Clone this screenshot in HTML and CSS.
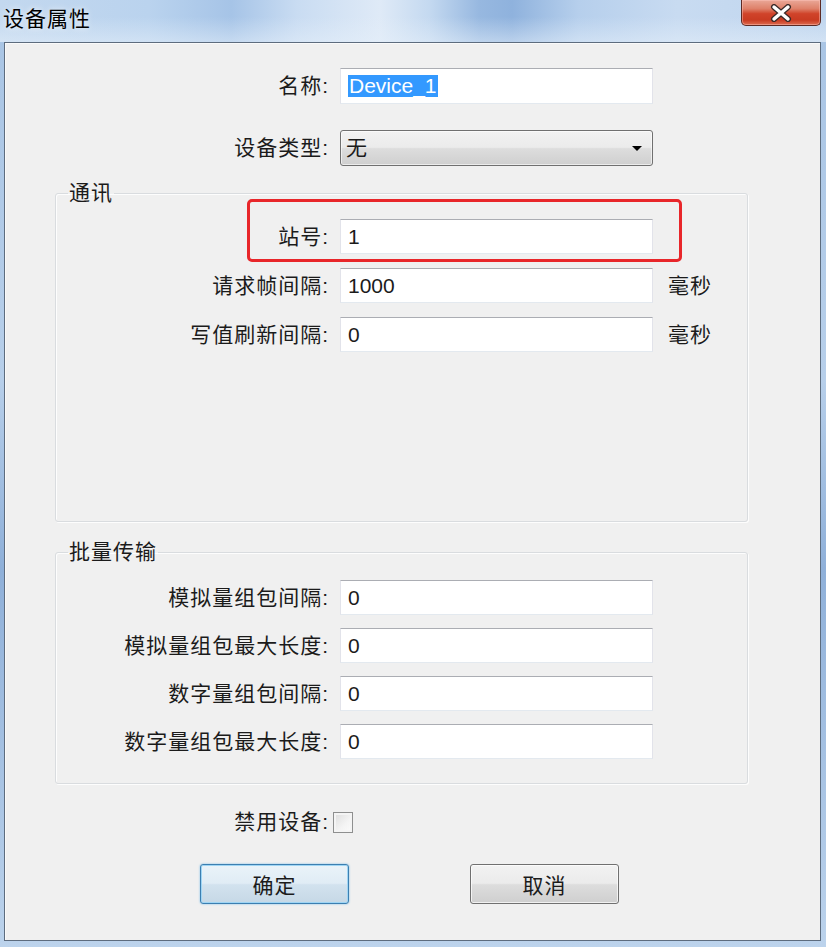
FILE: index.html
```html
<!DOCTYPE html>
<html lang="zh-CN">
<head>
    <meta charset="UTF-8">
    <title>设备属性</title>
    <link rel="stylesheet" href="styles.css">
</head>
<body>
    <div class="window">
        <div class="titlebar">
            <span class="title">设备属性</span>
            <button class="close-btn" aria-label="关闭">
                <svg width="22" height="18" viewBox="0 0 22 18">
                    <path d="M4 3 L18 15 M18 3 L4 15" stroke="#3a2a28" stroke-width="6" stroke-linecap="round"/>
                    <path d="M4 3 L18 15 M18 3 L4 15" stroke="#ffffff" stroke-width="3.4" stroke-linecap="round"/>
                </svg>
            </button>
        </div>

        <div class="client">
            <div class="row top-row">
                <label class="lab">名称:</label>
                <div class="field"><span class="sel">Device_1</span></div>
            </div>
            <div class="row top-row row-type">
                <label class="lab">设备类型:</label>
                <div class="select">
                    <span>无</span>
                    <span class="arrow"></span>
                </div>
            </div>

            <fieldset class="group group-comm">
                <legend>通讯</legend>
                <div class="row first">
                    <label class="lab">站号:</label>
                    <input class="field" type="text" value="1">
                    <span class="mark"></span>
                </div>
                <div class="row">
                    <label class="lab">请求帧间隔:</label>
                    <input class="field" type="text" value="1000">
                    <span class="unit">毫秒</span>
                </div>
                <div class="row">
                    <label class="lab">写值刷新间隔:</label>
                    <input class="field" type="text" value="0">
                    <span class="unit">毫秒</span>
                </div>
            </fieldset>

            <fieldset class="group group-batch">
                <legend>批量传输</legend>
                <div class="row first">
                    <label class="lab">模拟量组包间隔:</label>
                    <input class="field" type="text" value="0">
                </div>
                <div class="row">
                    <label class="lab">模拟量组包最大长度:</label>
                    <input class="field" type="text" value="0">
                </div>
                <div class="row">
                    <label class="lab">数字量组包间隔:</label>
                    <input class="field" type="text" value="0">
                </div>
                <div class="row">
                    <label class="lab">数字量组包最大长度:</label>
                    <input class="field" type="text" value="0">
                </div>
            </fieldset>

            <div class="row top-row row-check">
                <label class="lab">禁用设备:</label>
                <span class="checkbox"></span>
            </div>

            <div class="actions">
                <button class="btn btn-default">确定</button>
                <button class="btn">取消</button>
            </div>
        </div>
    </div>
</body>
</html>
```

FILE: styles.css
```css
html, body {
    margin: 0;
    padding: 0;
}
body {
    width: 826px;
    height: 947px;
    overflow: hidden;
    font-family: "Liberation Sans", "Noto Sans CJK SC", sans-serif;
    color: #1b1b1b;
    background: linear-gradient(180deg, #a8c4e4 0%, #b7cfea 40%, #8fb0d9 60%, #bcd3ec 100%);
}
.window {
    height: 947px;
    display: flex;
    flex-direction: column;
}
.titlebar {
    height: 42px;
    flex: none;
    display: flex;
    justify-content: space-between;
    align-items: flex-start;
    background:
        linear-gradient(180deg, rgba(255,255,255,0) 40%, rgba(230,240,250,0.5) 100%),
        linear-gradient(90deg, #c3d8ef 0%, #bad3ee 18%, #a6c4e7 28%, #c9dcf2 36%, #dfeaf7 46%, #c4d9f0 52%, #97b8e0 58%, #8fb2dd 62%, #b6cfec 70%, #c8dbf1 82%, #bfd5ee 100%);
}
.title {
    margin: 7px 0 0 3px;
    font-size: 21px;
    line-height: 24px;
    letter-spacing: 1px;
    color: #000;
    text-shadow: 0 0 6px rgba(255,255,255,0.9);
}
.close-btn {
    width: 80px;
    height: 26px;
    margin-right: 5px;
    padding: 0;
    border: 1px solid #5c2a24;
    border-top: none;
    border-radius: 0 0 5px 5px;
    background: linear-gradient(180deg, #eaa898 0%, #de8069 35%, #d0432a 55%, #c93b22 80%, #dd6c50 100%);
    box-shadow: inset 0 0 0 1px rgba(255,200,190,0.45);
    display: flex;
    align-items: center;
    justify-content: center;
}
.client {
    flex: 1;
    margin: 0 5px 6px 4px;
    border: 1px solid #5d6c7e;
    background: #f0f0f0;
    box-shadow: inset 1px 1px 0 #fafafa;
    padding-top: 25px;
    display: flex;
    flex-direction: column;
}
.row {
    display: grid;
    grid-template-columns: 272px 313px auto;
    column-gap: 12px;
    align-items: center;
    height: 35px;
    margin-top: 14px;
    position: relative;
}
.top-row {
    grid-template-columns: 323px 313px;
    height: 36px;
    margin-top: 0;
}
.row-type {
    margin-top: 26px;
}
.lab {
    text-align: right;
    font-size: 21px;
    line-height: 24px;
    letter-spacing: 1px;
    white-space: nowrap;
    margin-right: -1px;
}
.field {
    box-sizing: border-box;
    width: 313px;
    height: 100%;
    margin: 0;
    padding: 0 0 0 7px;
    border: 1px solid #e2e3ea;
    border-top-color: #abadb3;
    border-bottom-color: #e3e9ef;
    background: #fff;
    font-family: "Liberation Sans", "Noto Sans CJK SC", sans-serif;
    font-size: 21px;
    color: #1b1b1b;
    outline: none;
    display: flex;
    align-items: center;
}
.sel {
    background: #3399ff;
    color: #fff;
    line-height: 22px;
    padding: 0 1px;
}
.select {
    box-sizing: border-box;
    height: 36px;
    border: 1px solid #707070;
    border-radius: 3px;
    background: linear-gradient(180deg, #f2f2f2 0%, #ebebeb 48%, #dddddd 52%, #cfcfcf 100%);
    box-shadow: inset 0 0 0 1px rgba(255,255,255,0.6);
    display: flex;
    align-items: center;
    justify-content: space-between;
    padding: 0 10px 0 5px;
    font-size: 21px;
    line-height: 24px;
}
.arrow {
    width: 0;
    height: 0;
    border-left: 5px solid transparent;
    border-right: 5px solid transparent;
    border-top: 5px solid #000;
}
.unit {
    font-size: 21px;
    line-height: 24px;
    letter-spacing: 1px;
    margin-left: 3px;
}
.group {
    margin: 16px 72px 0 50px;
    padding: 0 0 169px;
    border: 1px solid #d9dcdf;
    border-radius: 3px;
    box-shadow: inset 1px 1px 0 #fdfdfd, 1px 1px 0 #fdfdfd;
    min-width: 0;
}
.group legend {
    margin-left: 12px;
    padding: 0 1px;
    font-size: 21px;
    line-height: 22px;
    letter-spacing: 1px;
}
.group .first {
    margin-top: 15px;
}
.group-batch {
    margin-top: 19px;
    padding-bottom: 24px;
}
.group-batch .row {
    margin-top: 13px;
}
.group-batch .first {
    margin-top: 17px;
}
.mark {
    position: absolute;
    left: 191px;
    top: -20px;
    width: 435px;
    height: 63px;
    box-sizing: border-box;
    border: 3px solid #e8262a;
    border-radius: 5px;
    pointer-events: none;
}
.row-check {
    margin-top: 26px;
    height: 22px;
    grid-template-columns: 323px 21px;
    column-gap: 5px;
}
.checkbox {
    box-sizing: border-box;
    width: 20px;
    height: 21px;
    border: 1px solid #8e8f8f;
    background: linear-gradient(135deg, #dcdcdc 0%, #f4f4f4 60%, #fbfbfb 100%);
    box-shadow: inset 0 0 0 2px #f4f4f4;
}
.actions {
    margin-top: 32px;
    display: flex;
    justify-content: center;
    gap: 121px;
    padding-right: 6px;
}
.btn {
    width: 149px;
    height: 40px;
    border: 1px solid #707070;
    border-radius: 3px;
    background: linear-gradient(180deg, #f2f2f2 0%, #ebebeb 48%, #dddddd 52%, #cfcfcf 100%);
    box-shadow: inset 0 0 0 1px rgba(255,255,255,0.7);
    font-family: "Liberation Sans", "Noto Sans CJK SC", sans-serif;
    font-size: 21px;
    letter-spacing: 1px;
    color: #1b1b1b;
    cursor: pointer;
}
.btn-default {
    border-color: #3c7fb1;
    box-shadow: inset 0 0 0 1px #9fd5f4, 0 0 2px #6bb6e6;
    background: linear-gradient(180deg, #eaf3f9 0%, #e0ecf5 48%, #d2e2ee 52%, #c6d8e6 100%);
}
```
